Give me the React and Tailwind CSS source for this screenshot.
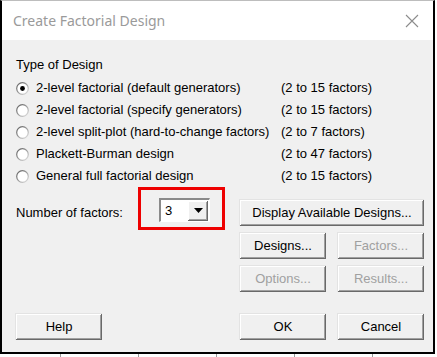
import React from "react";

function Radio({ checked }) {
  return (
    <svg width="13" height="13" viewBox="0 0 13 13" className="shrink-0">
      <defs>
        <linearGradient id="rg" x1="0" y1="0" x2="1" y2="1">
          <stop offset="0" stopColor="#5a5a5a" />
          <stop offset="0.5" stopColor="#9a9a9a" />
          <stop offset="1" stopColor="#e4e4e4" />
        </linearGradient>
      </defs>
      <circle cx="6.5" cy="6.5" r="5.8" fill="#ffffff" stroke="url(#rg)" strokeWidth="1.2" />
      {checked && <circle cx="6.5" cy="6.5" r="2.4" fill="#000000" />}
    </svg>
  );
}

function Btn({ children, w = "w-[87px]", disabled }) {
  return (
    <div
      className={`${w} h-[27px] flex items-center justify-center bg-[#f0f0f0] border-t border-l border-[#e3e3e3] shadow-[inset_-1px_-1px_0_#696969,inset_1px_1px_0_#ffffff,inset_-2px_-2px_0_#a0a0a0] text-[13px] ${
        disabled ? "text-[#a0a0a0]" : "text-black"
      }`}
    >
      {children}
    </div>
  );
}

const rows = [
  ["2-level factorial (default generators)", "(2 to 15 factors)", true],
  ["2-level factorial (specify generators)", "(2 to 15 factors)", false],
  ["2-level split-plot (hard-to-change factors)", "(2 to 7 factors)", false],
  ["Plackett-Burman design", "(2 to 47 factors)", false],
  ["General full factorial design", "(2 to 15 factors)", false],
];

export default function App() {
  return (
    <div
      className="w-[437px] h-[357px] bg-white flex flex-col overflow-hidden"
      style={{ fontFamily: '"Liberation Sans", Arial, sans-serif' }}
    >
      <div className="w-[435px] h-[354px] shrink-0 flex flex-col border-2 border-black border-t-[#bdbdbd] border-t">
        <div className="h-[39px] shrink-0 bg-white flex items-center justify-between pl-[11px] pr-[14px]">
          <span
            className="text-[14px] text-[#9a9a9a]"
            style={{ fontFamily: '"Noto Sans", "Open Sans", sans-serif' }}
          >
            Create Factorial Design
          </span>
          <svg width="14" height="14" viewBox="0 0 14 14">
            <path d="M1 1 L13 13 M13 1 L1 13" stroke="#8c8c8c" strokeWidth="1.1" />
          </svg>
        </div>
        <div className="flex-1 bg-[#f0f0f0] flex flex-col text-[13px] text-black">
          <div className="h-[16px] mt-[17px] pl-[14px] leading-[16px]">Type of Design</div>
          <div className="mt-[4px] flex flex-col">
            {rows.map(([label, range, checked], i) => (
              <div key={i} className="h-[22px] flex items-center">
                <div className="w-[279px] flex items-center pl-[14px] gap-[7px]">
                  <Radio checked={checked} />
                  <span>{label}</span>
                </div>
                <span>{range}</span>
              </div>
            ))}
          </div>
          <div className="flex">
            <div className="w-[237px] flex items-start">
              <span className="pl-[14px] mt-[16px] w-[136px]">Number of factors:</span>
              <div className="w-[87px] h-[43px] border-[3px] border-[#ee0000] pt-[8px] pl-[18px]">
                <div className="w-[51px] h-[24px] bg-white flex items-center border-t-2 border-l-2 border-t-[#8a8a8a] border-l-[#8a8a8a] border-b border-r border-b-white border-r-white">
                  <span className="flex-1 pl-[4px]">3</span>
                  <div className="w-[20px] h-[20px] mr-[1px] flex items-center justify-center bg-[#f0f0f0] shadow-[inset_-1px_-1px_0_#696969,inset_1px_1px_0_#ffffff,inset_-2px_-2px_0_#a0a0a0]">
                    <svg width="9" height="5" viewBox="0 0 9 5">
                      <path d="M0 0 L9 0 L4.5 5 Z" fill="#000" />
                    </svg>
                  </div>
                </div>
              </div>
            </div>
            <div className="mt-[12px] flex flex-col gap-[6px]">
              <Btn w="w-[185px]">Display Available Designs...</Btn>
              <div className="flex gap-[11px]">
                <Btn>Designs...</Btn>
                <Btn disabled>Factors...</Btn>
              </div>
              <div className="flex gap-[11px]">
                <Btn disabled>Options...</Btn>
                <Btn disabled>Results...</Btn>
              </div>
            </div>
          </div>
          <div className="mt-[21px] flex">
            <div className="w-[237px] pl-[13px]">
              <Btn>Help</Btn>
            </div>
            <div className="flex gap-[11px]">
              <Btn>OK</Btn>
              <Btn>Cancel</Btn>
            </div>
          </div>
        </div>
      </div>
      <div className="flex-1 flex">
        <div className="w-[61px] border-r border-[#9a9a9a]" />
        <div className="w-[78px] border-r border-[#9a9a9a]" />
        <div className="w-[78px] border-r border-[#9a9a9a]" />
        <div className="w-[78px] border-r border-[#9a9a9a]" />
        <div className="w-[78px] border-r border-[#9a9a9a]" />
      </div>
    </div>
  );
}
